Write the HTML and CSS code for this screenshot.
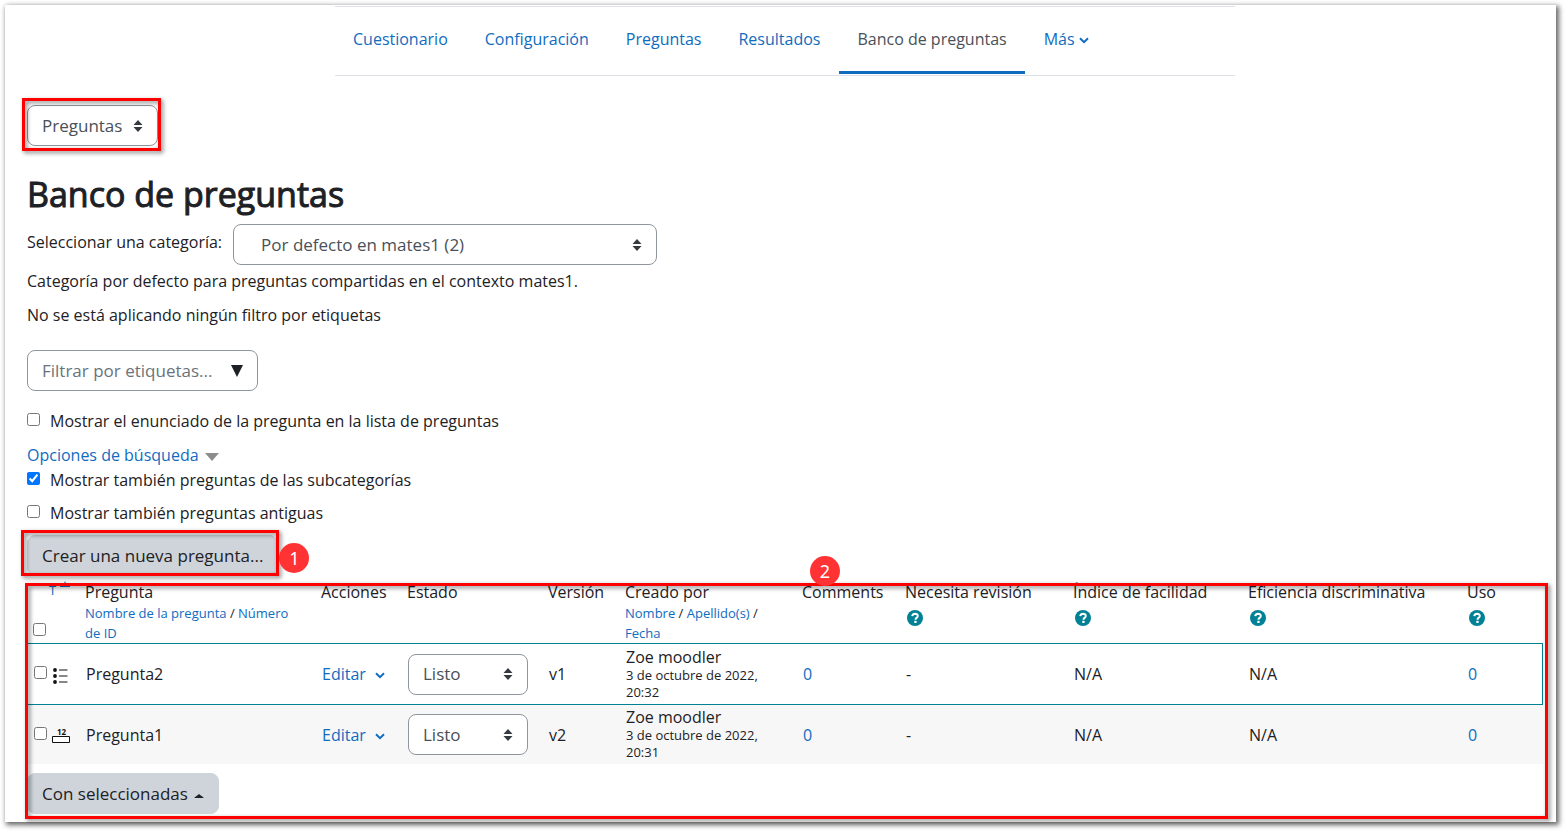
FILE: index.html
```
<!DOCTYPE html>
<html lang="es">
<head>
<meta charset="utf-8">
<title>Banco de preguntas</title>
<link rel="stylesheet" href="styles.css">
</head>
<body>
<svg class="defs" aria-hidden="true">
  <symbol id="updown" viewBox="0 0 10 12"><path d="M0.5 5 L5 0 L9.500 5Z M0.5 7 L5 12 L9.500 7Z"/></symbol>
  <symbol id="chevron" viewBox="0 0 10 7"><path d="M1 1.300 L5 5.200 L9 1.300" fill="none" stroke="currentColor" stroke-width="2"/></symbol>
  <symbol id="help" viewBox="0 0 16 16"><circle cx="8" cy="8" r="8"/><path d="M5.200 6.100 Q5.700 3.700 8.100 3.700 Q10.800 3.800 10.800 6 Q10.800 7.200 9.500 8 Q8.500 8.500 8.500 9.700" fill="none" stroke="#fff" stroke-width="2"/><path d="M7.300 10.800h2.300v2.200h-2.300z" fill="#fff"/></symbol>
</svg>
<main class="sheet">
  <nav class="tabs">
    <a class="tab" href="#">Cuestionario</a>
    <a class="tab" href="#">Configuración</a>
    <a class="tab" href="#">Preguntas</a>
    <a class="tab" href="#">Resultados</a>
    <a class="tab active" href="#">Banco de preguntas</a>
    <a class="tab" href="#">Más <svg class="chevron"><use href="#chevron"/></svg></a>
  </nav>

  <div class="jump marked">
    <span class="picker picker-jump">
      <select aria-label="Navegación"><option>Preguntas</option></select>
      <svg class="updown"><use href="#updown"/></svg>
    </span>
    <span class="frame frame-jump"></span>
  </div>

  <h1>Banco de preguntas</h1>

  <div class="category">
    <label for="category">Seleccionar una categoría:</label>
    <span class="picker picker-wide">
      <select id="category"><option>Por defecto en mates1 (2)</option></select>
      <svg class="updown"><use href="#updown"/></svg>
    </span>
  </div>
  <p class="info">Categoría por defecto para preguntas compartidas en el contexto mates1.</p>
  <p class="info">No se está aplicando ningún filtro por etiquetas</p>

  <div class="tagfilter">
    <input type="text" placeholder="Filtrar por etiquetas..." aria-label="Filtrar por etiquetas">
    <svg class="drop" viewBox="0 0 12 12"><path d="M0 0h12L6 12z"/></svg>
  </div>

  <label class="check"><input type="checkbox"> Mostrar el enunciado de la pregunta en la lista de preguntas</label>
  <a class="options" href="#">Opciones de búsqueda <svg class="caret" viewBox="0 0 14 8"><path d="M0 0h14L7 8z"/></svg></a>
  <label class="check check-sub"><input type="checkbox" checked> Mostrar también preguntas de las subcategorías</label>
  <label class="check check-old"><input type="checkbox"> Mostrar también preguntas antiguas</label>

  <div class="create marked">
    <button class="btn" type="button">Crear una nueva pregunta...</button>
    <span class="frame frame-create"></span>
    <span class="step step-one">1</span>
  </div>

  <section class="bank marked">
    <table>
      <colgroup><col class="c-check"><col class="c-type"><col class="c-name"><col class="c-actions"><col class="c-state"><col class="c-version"><col class="c-author"><col class="c-comments"><col class="c-review"><col class="c-ease"><col class="c-disc"><col class="c-use"></colgroup>
      <thead>
        <tr>
          <th class="pick"><input type="checkbox" aria-label="Seleccionar todas"></th>
          <th class="type"><a class="typelink" href="#">T<svg class="sort" viewBox="0 0 12 6"><path d="M1 6V5H4L6 0L8 5H11V6z"/></svg></a></th>
          <th>Pregunta<div class="sorts sorts-name"><a href="#">Nombre de la pregunta</a> / <a href="#">Número de ID</a></div></th>
          <th>Acciones</th>
          <th>Estado</th>
          <th>Versión</th>
          <th>Creado por<div class="sorts"><a href="#">Nombre</a> / <a href="#">Apellido(s)</a> / <a href="#">Fecha</a></div></th>
          <th>Comments</th>
          <th>Necesita revisión<a class="helplink" href="#" aria-label="Ayuda"><svg class="help"><use href="#help"/></svg></a></th>
          <th>Índice de facilidad<a class="helplink" href="#" aria-label="Ayuda"><svg class="help"><use href="#help"/></svg></a></th>
          <th>Eficiencia discriminativa<a class="helplink" href="#" aria-label="Ayuda"><svg class="help"><use href="#help"/></svg></a></th>
          <th>Uso<a class="helplink" href="#" aria-label="Ayuda"><svg class="help"><use href="#help"/></svg></a></th>
        </tr>
      </thead>
      <tbody>
        <tr class="current">
          <td class="pick"><input type="checkbox" aria-label="Pregunta2"></td>
          <td class="type"><svg class="qtype" viewBox="0 0 20 16"><g><circle cx="4" cy="2" r="1.900"/><circle cx="4" cy="8" r="1.900"/><circle cx="4" cy="14" r="1.900"/></g><path d="M8 1.500h8.500v1h-8.500zM8 7.500h8.500v1h-8.500zM8 13.500h8.500v1h-8.500z"/></svg></td>
          <td>Pregunta2</td>
          <td><a href="#">Editar <svg class="chevron wide"><use href="#chevron"/></svg></a></td>
          <td><span class="picker picker-state"><select aria-label="Estado de Pregunta2"><option>Listo</option></select><svg class="updown"><use href="#updown"/></svg></span></td>
          <td>v1</td>
          <td class="author">Zoe moodler<div class="date">3 de octubre de 2022, 20:32</div></td>
          <td><a href="#">0</a></td>
          <td>-</td>
          <td>N/A</td>
          <td>N/A</td>
          <td><a href="#">0</a></td>
        </tr>
        <tr class="alt">
          <td class="pick"><input type="checkbox" aria-label="Pregunta1"></td>
          <td class="type"><svg class="qtype" viewBox="0 0 20 16"><path d="M1.500 7.500h17v6h-17z" fill="#fff" stroke="#111"/><text x="6" y="6" class="digits">12</text></svg></td>
          <td>Pregunta1</td>
          <td><a href="#">Editar <svg class="chevron wide"><use href="#chevron"/></svg></a></td>
          <td><span class="picker picker-state"><select aria-label="Estado de Pregunta1"><option>Listo</option></select><svg class="updown"><use href="#updown"/></svg></span></td>
          <td>v2</td>
          <td class="author">Zoe moodler<div class="date">3 de octubre de 2022, 20:31</div></td>
          <td><a href="#">0</a></td>
          <td>-</td>
          <td>N/A</td>
          <td>N/A</td>
          <td><a href="#">0</a></td>
        </tr>
      </tbody>
    </table>
    <button class="btn bulk" type="button">Con seleccionadas <svg class="up" viewBox="0 0 10 4"><path d="M0 4Q1 3 5 0Q9 3 10 4z"/></svg></button>
    <span class="frame frame-bank"></span>
    <span class="step step-two">2</span>
  </section>
</main>
</body>
</html>
```
FILE: styles.css
```
* { box-sizing: border-box; }
body {
  margin: 0;
  padding: 5px 9px 9px 5px;
  background: #fff;
  color: #1d2125;
  font: 16px/24px "Open Sans", sans-serif;
}
a { color: #0f6cbf; text-decoration: none; }
svg { fill: currentColor; }
.defs { position: absolute; width: 0; height: 0; }

.sheet {
  display: flex;
  flex-direction: column;
  align-items: flex-start;
  padding: 1px 13px 8px 22px;
  background: #fff;
  box-shadow: 2px 2px 5px 1px rgba(0, 0, 0, .6);
}

.tabs {
  display: flex;
  gap: 1px;
  align-self: center;
  width: 100%;
  max-width: 900px;
  height: 70px;
  border-top: 1px solid #dee2e6;
  border-bottom: 1px solid #dee2e6;
}
.tab {
  height: 67px;
  padding: 20px 18px 0;
  border-bottom: 3px solid transparent;
}
.tab.active { color: #495057; border-color: #0f6cbf; }
.chevron { width: 10px; height: 7px; vertical-align: 1px; }
.chevron.wide { margin-left: 5px; }

.marked { position: relative; }
.frame {
  position: absolute;
  border: 3px solid #f00;
  filter: drop-shadow(2px 2px 2px rgba(0, 0, 0, .5));
  pointer-events: none;
}
.frame-jump { inset: -7px -3px -5px -5px; }
.frame-create { inset: -5px -1px 0 -6px; }
.frame-bank { inset: 3px -5px -5px -2px; }
.step {
  position: absolute;
  width: 30px;
  height: 30px;
  border-radius: 50%;
  background: #f33;
  color: #fff;
  font: 18px/30px "Noto Sans", sans-serif;
  text-align: center;
}
.step-one { right: -31px; top: 8px; }
.step-two { left: 783px; top: -24px; }

.picker { display: inline-grid; align-items: center; }
.picker > * { grid-area: 1 / 1; }
.picker select {
  appearance: none;
  width: 100%;
  height: 41px;
  padding: 0 30px 0 14px;
  border: 1px solid #8f959e;
  border-radius: 8px;
  background: #fff;
  color: #495057;
  font: inherit;
  font-size: 17px;
}
.updown {
  justify-self: end;
  width: 10px;
  height: 12px;
  margin-right: 15px;
  color: #343a40;
  pointer-events: none;
}
.jump { display: flex; margin-top: 29px; }
.picker-jump { width: 131px; }
.picker-wide { width: 424px; }
.picker-wide select { padding-left: 27px; }
.picker-state { width: 120px; }

h1 {
  margin: 27px 0 9px;
  font-size: 34px;
  line-height: 42px;
  font-weight: 400;
  -webkit-text-stroke: 1px currentColor;
}
.category { display: flex; gap: 11px; }
.category label { line-height: 36px; }
.info { margin: 0 0 10px; }
.category + .info { margin-top: 4px; }

.tagfilter { display: grid; align-items: center; width: 231px; margin: 13px 0 18px; }
.tagfilter > * { grid-area: 1 / 1; }
.tagfilter input {
  width: 100%;
  height: 41px;
  padding: 0 40px 0 14px;
  border: 1px solid #8f959e;
  border-radius: 8px;
  font: inherit;
  font-size: 17px;
}
.tagfilter input::placeholder { color: #6a737b; }
.drop { justify-self: end; width: 12px; height: 12px; margin-right: 15px; }

input[type="checkbox"] { width: 13px; height: 13px; margin: 0; flex: none; }
.check { display: flex; gap: 10px; }
.check input[type="checkbox"] { margin-top: 4px; }
.options { margin-top: 10px; }
.caret { width: 14px; height: 8px; margin-left: 2px; color: #8c8c8c; }
.check-sub { margin-top: 1px; }
.check-old { margin-top: 9px; }

.btn {
  height: 41px;
  padding: 0 14px;
  border: 1px solid #ced4da;
  border-radius: 8px;
  background: #ced4da;
  color: #1d2125;
  font: inherit;
  font-size: 17px;
}
.create { display: flex; margin-top: 10px; }

.bank { align-self: stretch; margin-top: 4px; }
table {
  width: 100%;
  table-layout: fixed;
  border-collapse: separate;
  border-spacing: 0;
}
th, td { padding: 0 0 0 1px; text-align: left; font-weight: 400; }
th { height: 63px; padding: 0; vertical-align: top; }
.c-check { width: 21px; }
.c-type { width: 37px; }
.c-name { width: 236px; }
.c-actions { width: 86px; }
.c-state { width: 141px; }
.c-version { width: 77px; }
.c-author { width: 177px; }
.c-comments { width: 103px; }
.c-review { width: 168px; }
.c-ease { width: 175px; }
.c-disc { width: 219px; }
.c-use { width: 76px; }
.pick { padding-left: 7px; }
th.pick { padding: 0 0 6px 6px; vertical-align: bottom; line-height: 13px; }
td.pick input { display: block; margin-bottom: 3px; }
th.type { font-size: 13px; line-height: 20px; padding-left: 1px; }
.typelink { display: flex; gap: 3px; }
.sort { width: 12px; height: 6px; margin-top: 1px; }
.sorts { font-size: 13px; line-height: 20px; margin-top: -1px; padding-right: 12px; }
.sorts-name { padding-right: 32px; }
.helplink { display: block; height: 16px; margin: 6px 0 0 2px; color: #008196; }
.help { display: block; width: 16px; height: 16px; }
td { height: 59px; }
.current td { border-top: 1px solid #008196; border-bottom: 1px solid #008196; height: 62px; }
.current td:last-child { border-right: 1px solid #008196; }
.alt td { background: #f7f7f7; }
.type { padding-left: 2px; }
.qtype { display: block; width: 20px; height: 16px; margin: 4px 0 0 1px; color: #111; }
.digits { font: bold 8px "Open Sans", sans-serif; }
td .picker { display: grid; }
.author { line-height: 20px; }
td.author { padding-bottom: 1px; }
.date { font-size: 13px; line-height: 17px; padding-right: 20px; }
.bulk { display: block; margin-top: 9px; }
.up { width: 10px; height: 4px; vertical-align: 2px; margin-left: 2px; }
```
